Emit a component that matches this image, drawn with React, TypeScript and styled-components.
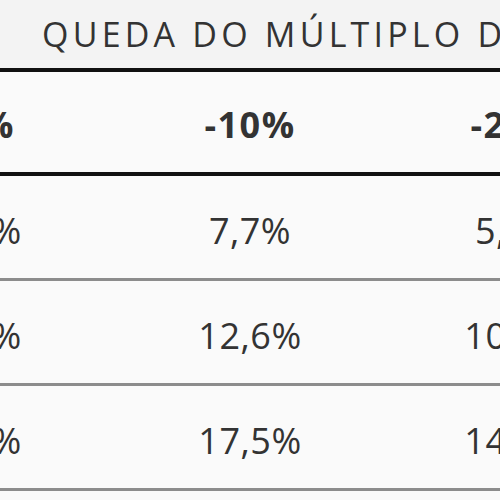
import React from "react";
import styled, { createGlobalStyle } from "styled-components";

const Global = createGlobalStyle`
  html, body { margin: 0; padding: 0; background: #fafafa; }
  body { width: 500px; height: 500px; overflow: hidden; font-family: "Open Sans", "Liberation Sans", sans-serif; color: #333; }
`;

const Page = styled.div`
  width: 500px;
  height: 500px;
  overflow: hidden;
  background: #fafafa;
`;

const TitleBar = styled.div`
  height: 68px;
  background: #f3f3f3;
  display: flex;
  align-items: center;
  padding-left: 42px;
  white-space: nowrap;
  font-size: 34px;
  font-weight: 400;
  letter-spacing: 4.2px;
  color: #333;
  border-bottom: 4px solid #111;
`;

const Table = styled.div`
  width: 826px;
  margin-left: -177px;
  display: flex;
  flex-direction: column;
`;

const Row = styled.div<{ $head?: boolean }>`
  display: grid;
  grid-template-columns: 294px 266px 266px;
  height: ${(p) => (p.$head ? "100px" : "102px")};
  border-bottom: ${(p) => (p.$head ? "4px solid #111" : "3px solid #8c8c8c")};
`;

const Cell = styled.div<{ $head?: boolean; $offset?: number }>`
  display: flex;
  align-items: center;
  justify-content: center;
  padding-top: ${(p) => (p.$head ? "4px" : "6px")};
  padding-left: ${(p) => p.$offset ?? 0}px;
  font-size: 36px;
  font-weight: ${(p) => (p.$head ? 700 : 400)};
  letter-spacing: ${(p) => (p.$head ? "1.5px" : "0.5px")};
  color: #333;
  white-space: nowrap;
`;

const head = ["0%", "-10%", "-20%"];
const rows = [
  ["10,4%", "7,7%", "5,0%"],
  ["15,3%", "12,6%", "10,0%"],
  ["20,2%", "17,5%", "14,8%"],
];

export default function App() {
  return (
    <Page>
      <Global />
      <TitleBar>QUEDA DO MÚLTIPLO DE SAÍDA</TitleBar>
      <Table>
        <Row $head>
          {head.map((h, j) => (
            <Cell $head $offset={j === 0 ? 34 : 0} key={h}>
              {h}
            </Cell>
          ))}
        </Row>
        {rows.map((r, i) => (
          <Row key={i}>
            {r.map((v, j) => (
              <Cell key={j}>{v}</Cell>
            ))}
          </Row>
        ))}
      </Table>
    </Page>
  );
}
